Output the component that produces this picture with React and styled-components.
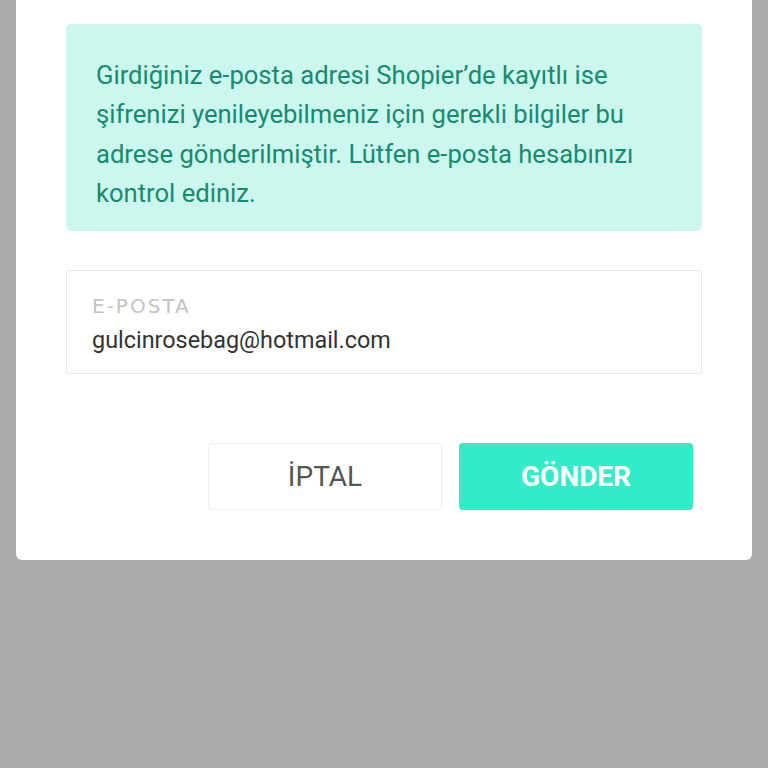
import React from "react";
import styled, { createGlobalStyle } from "styled-components";

const Global = createGlobalStyle`
  html, body { margin: 0; padding: 0; background: #a9aaab; }
  body { font-family: Roboto, "Liberation Sans", sans-serif; }
  * { box-sizing: border-box; }
`;

const Page = styled.div`
  width: 768px;
  height: 768px;
  padding: 0 16px;
  background: #a9aaab;
  overflow: hidden;
`;

const Card = styled.div`
  background: #ffffff;
  border-radius: 0 0 6px 6px;
  padding: 24px 50px 50px;
  display: flex;
  flex-direction: column;
`;

const Alert = styled.div`
  background: #ccf7ee;
  border-radius: 5px;
  padding: 32px 30px 18px;
  color: #178b70;
  font-size: 25.6px;
  line-height: 39.3px;
  white-space: nowrap;
`;

const Field = styled.div`
  margin-top: 39px;
  height: 104px;
  border: 1px solid #e6e6e6;
  border-radius: 3px;
  padding: 22px 25px 0;
  display: flex;
  flex-direction: column;
`;

const Label = styled.div`
  font-family: "DejaVu Sans", "Noto Sans", sans-serif;
  font-size: 20px;
  letter-spacing: 2px;
  color: #c3c3c3;
  line-height: 26px;
`;

const Value = styled.div`
  margin-top: 7px;
  font-size: 23.4px;
  color: #333333;
  line-height: 28px;
`;

const Actions = styled.div`
  margin-top: 69px;
  margin-right: 9px;
  display: flex;
  justify-content: flex-end;
  gap: 17px;
`;

const Button = styled.button`
  width: 234px;
  height: 67px;
  border-radius: 4px;
  font-family: Roboto, "Liberation Sans", sans-serif;
  font-size: 28px;
  cursor: pointer;
  border: ${(p) => (p.$primary ? "none" : "1px solid #efefef")};
  background: ${(p) => (p.$primary ? "#33ebc8" : "#ffffff")};
  color: ${(p) => (p.$primary ? "#ffffff" : "#555555")};
  font-weight: ${(p) => (p.$primary ? 700 : 400)};
`;

export default function App() {
  return (
    <Page>
      <Global />
      <Card>
        <Alert>
          Girdiğiniz e-posta adresi Shopier’de kayıtlı ise
          <br />
          şifrenizi yenileyebilmeniz için gerekli bilgiler bu
          <br />
          adrese gönderilmiştir. Lütfen e-posta hesabınızı
          <br />
          kontrol ediniz.
        </Alert>
        <Field>
          <Label>E-POSTA</Label>
          <Value>gulcinrosebag@hotmail.com</Value>
        </Field>
        <Actions>
          <Button>İPTAL</Button>
          <Button $primary>GÖNDER</Button>
        </Actions>
      </Card>
    </Page>
  );
}
